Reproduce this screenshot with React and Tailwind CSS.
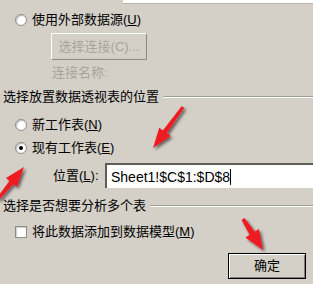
import React from 'react'

const font = { fontFamily: '"Liberation Sans", "Noto Sans CJK SC", sans-serif' }

const arrowPoints = (x1, y1, x2, y2, headLen, headW, shaftW) => {
  const dx = x2 - x1
  const dy = y2 - y1
  const len = Math.hypot(dx, dy)
  const ux = dx / len
  const uy = dy / len
  const nx = -uy
  const ny = ux
  const bx = x2 - ux * headLen
  const by = y2 - uy * headLen
  const p = (x, y) => `${x.toFixed(1)},${y.toFixed(1)}`
  return [
    p(x1 + nx * shaftW * 0.3, y1 + ny * shaftW * 0.3),
    p(bx + nx * shaftW / 2, by + ny * shaftW / 2),
    p(bx + nx * headW / 2, by + ny * headW / 2),
    p(x2, y2),
    p(bx - nx * headW / 2, by - ny * headW / 2),
    p(bx - nx * shaftW / 2, by - ny * shaftW / 2),
    p(x1 - nx * shaftW * 0.3, y1 - ny * shaftW * 0.3),
  ].join(' ')
}

const Radio = ({ checked }) => (
  <span className="relative w-[12px] h-[12px] rounded-full bg-white border border-[#8d8b86] shadow-[inset_1px_1px_1px_rgba(0,0,0,0.25)] flex items-center justify-center">
    {checked && <span className="w-[4px] h-[4px] rounded-full bg-black" />}
  </span>
)

const Header = ({ children }) => (
  <div className="flex items-center h-[14px] pl-[3px] gap-[4px]">
    <span className="whitespace-nowrap">{children}</span>
    <div className="flex-1 border-t border-[#a09d96] border-b border-b-white" />
  </div>
)

export default function App() {
  return (
    <div
      className="relative w-[313px] h-[284px] overflow-hidden bg-[#d4d0c8] text-[13px] leading-[14px] text-black"
      style={font}
    >
      {/* field cut off at the top */}
      <div className="ml-[123px] h-[4px] bg-white border-b border-[#b9b6ae]" />

      <div className="flex flex-col">
        <div className="mt-[9px] h-[14px] flex items-center pl-[15px] gap-[5px]">
          <Radio />
          <span>使用外部数据源(<u>U</u>)</span>
        </div>

        <button
          disabled
          className="mt-[6px] ml-[51px] w-[96px] h-[27px] flex items-center justify-center text-[#a7a49d] border border-t-white border-l-white border-r-[#8e8b84] border-b-[#8e8b84] bg-[#d4d0c8]"
        >
          选择连接(C)...
        </button>

        <div className="mt-[6px] h-[14px] pl-[52px] text-[#a7a49d]">连接名称:</div>

        <div className="mt-[10px]">
          <Header>选择放置数据透视表的位置</Header>
        </div>

        <div className="mt-[14px] h-[14px] flex items-center pl-[15px] gap-[5px]">
          <Radio />
          <span>新工作表(<u>N</u>)</span>
        </div>

        <div className="mt-[9px] h-[14px] flex items-center pl-[15px] gap-[5px]">
          <Radio checked />
          <span>现有工作表(<u>E</u>)</span>
        </div>

        <div className="mt-[8px] h-[25px] flex items-center">
          <span className="pl-[53px] w-[105px]">位置(<u>L</u>):</span>
          <div className="flex-1 h-full bg-white border-t-2 border-l-2 border-[#5f5d58] flex items-center pl-[4px]">
            <span className="text-[14px]">Sheet1!$C$1:$D$8</span>
            <span className="w-px h-[16px] bg-black" />
          </div>
        </div>

        <div className="mt-[11px]">
          <Header>选择是否想要分析多个表</Header>
        </div>

        <div className="mt-[12px] h-[14px] flex items-center pl-[15px] gap-[5px]">
          <span className="w-[12px] h-[12px] bg-white border border-[#8d8b86] shadow-[inset_1px_1px_1px_rgba(0,0,0,0.2)]" />
          <span>将此数据添加到数据模型(<u>M</u>)</span>
        </div>

        <button className="mt-[14px] ml-[228px] w-[78px] h-[26px] flex items-center justify-center border border-black bg-[#d4d0c8] shadow-[inset_1px_1px_0_#fff,inset_-1px_-1px_0_#808080]">
          确定
        </button>
      </div>

      {/* red annotation arrows */}
      <svg className="absolute inset-0 pointer-events-none" width="313" height="284">
        <defs>
          <filter id="sh" x="-50%" y="-50%" width="200%" height="200%">
            <feDropShadow dx="2" dy="2" stdDeviation="1.6" floodColor="#000" floodOpacity="0.55" />
          </filter>
        </defs>
        <g fill="#ee1c23" filter="url(#sh)">
          <polygon points={arrowPoints(183, 107, 153, 148, 20, 14, 5)} />
          <polygon points={arrowPoints(-2, 199, 24, 167, 20, 14, 5)} />
          <polygon points={arrowPoints(243, 219, 263, 250, 20, 16, 6)} />
        </g>
      </svg>
    </div>
  )
}
